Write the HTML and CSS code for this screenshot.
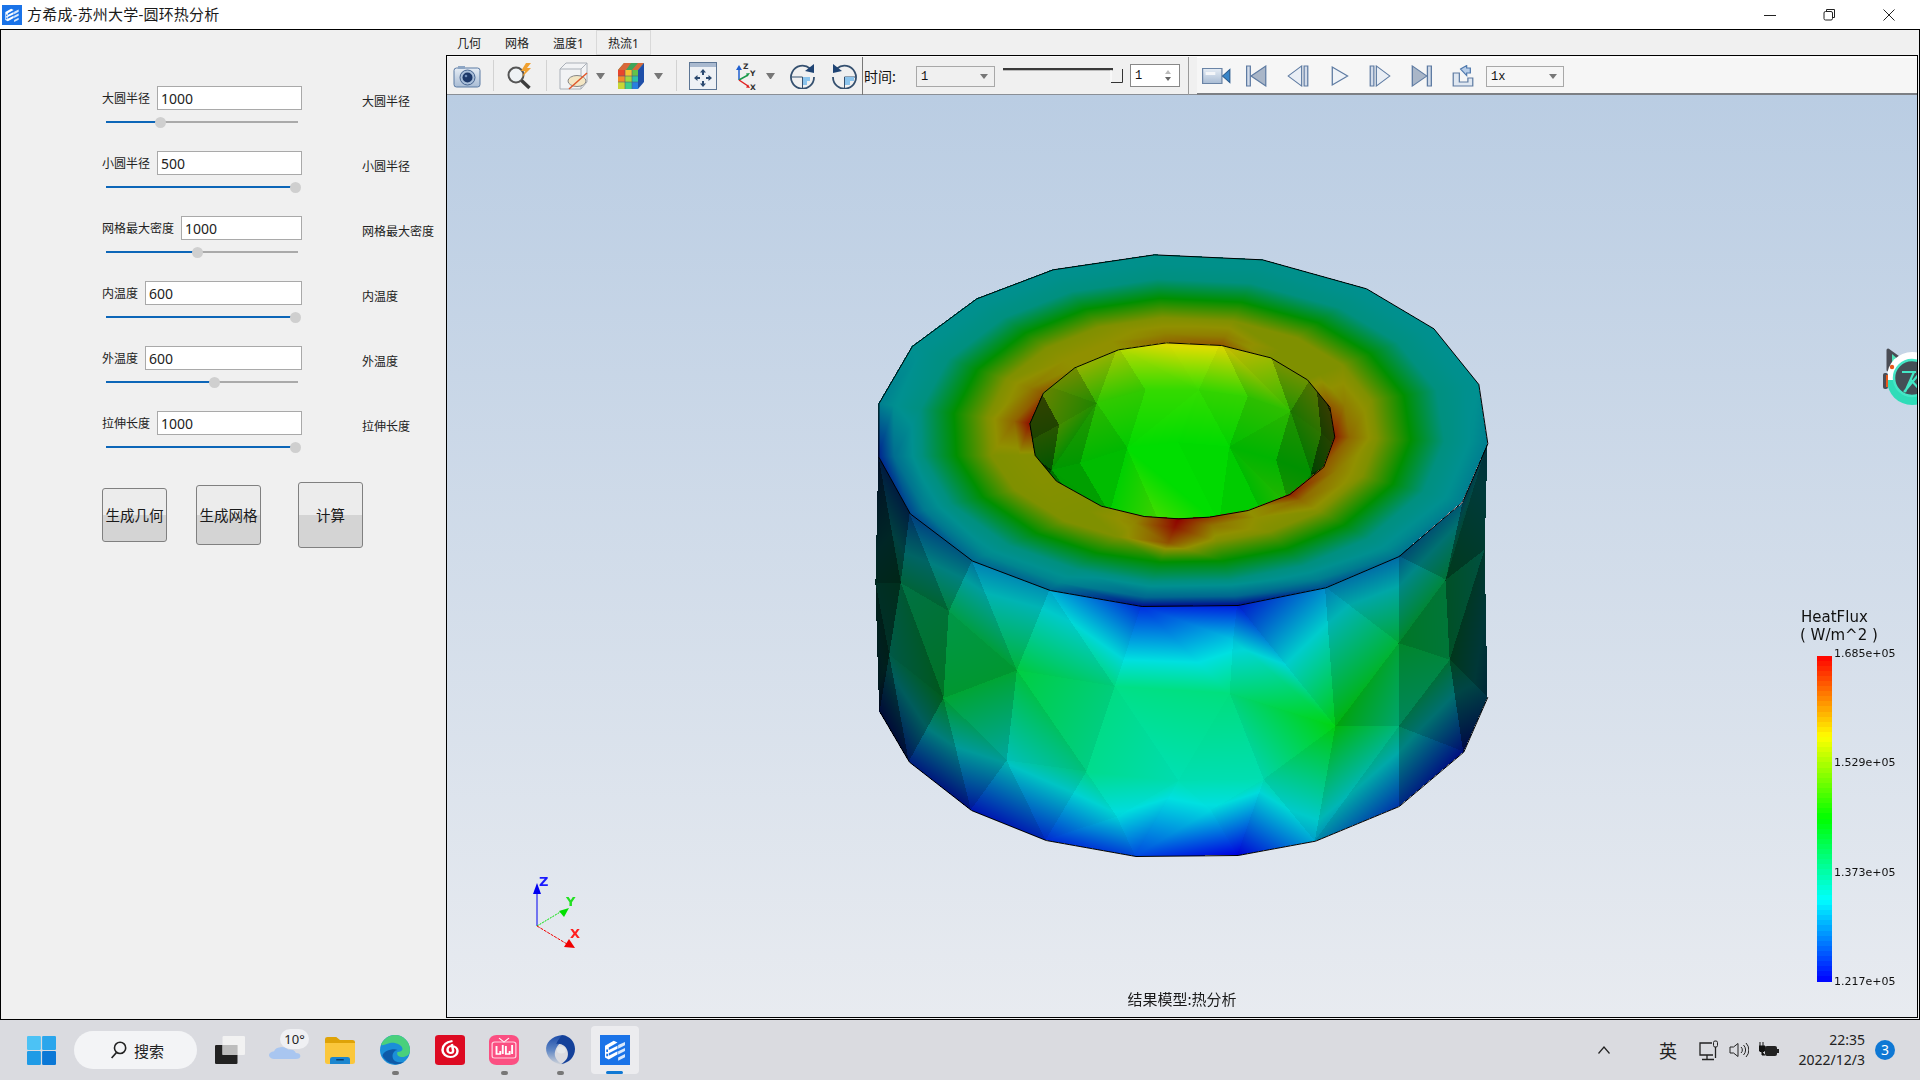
FILE: index.html
```html
<!DOCTYPE html>
<html lang="zh-CN">
<head>
<meta charset="utf-8">
<title>方希成-苏州大学-圆环热分析</title>
<link rel="stylesheet" href="styles.css">
</head>
<body>
<svg class="defs" width="0" height="0">
  <symbol id="appicon" viewBox="0 0 24 24">
    <rect width="24" height="24" fill="#1a73e8"/>
    <path d="M4 8.500 11 4.500 14 6 7 10v2l7-3.500V11L7 14.500v2L14 13v2.500L7 19.500 4 18Z" fill="#fff"/>
    <path d="M14.500 8 20 5.500v2.600L14.500 11Zm0 5L20 10.300v2.500L14.500 15.500Zm0 5L20 15.200v2.500L14.500 20.500Z" fill="#d8e8fb"/>
    <path d="M5 11.500h1.400v2H5Zm0 3.500h1.400v2H5Z" fill="#1a73e8"/>
  </symbol>
  <linearGradient id="steel" x1="0" y1="0" x2="0" y2="1"><stop offset="0" stop-color="#e6edf5"/><stop offset="1" stop-color="#a9bcd4"/></linearGradient>
  <linearGradient id="swirl" x1="0" y1="0" x2="0" y2="1"><stop offset="0" stop-color="#1a4aa8"/><stop offset=".5" stop-color="#5f86c4"/><stop offset="1" stop-color="#d3d6da"/></linearGradient>
</svg>

<header class="titlebar">
  <svg class="title-icon"><use href="#appicon"/></svg>
  <span class="title-text">方希成-苏州大学-圆环热分析</span>
  <div class="winctl">
    <svg width="12" height="12" viewBox="0 0 12 12"><path d="M0 6.500h12" stroke="#222" fill="none"/></svg>
    <svg width="13" height="13" viewBox="0 0 13 13"><path d="M3.500 3V1.500h8v8H10" stroke="#222" fill="none"/><rect x="1" y="3.500" width="8.500" height="8.500" rx="1.500" stroke="#222" fill="none"/></svg>
    <svg width="12" height="12" viewBox="0 0 12 12"><path d="M.5.500l11 11M11.500.500l-11 11" stroke="#222" fill="none"/></svg>
  </div>
</header>

<main class="main">
  <section class="panel">
    <div class="field">
      <div class="fline"><label class="flabel">大圆半径</label><input class="finput" value="1000"></div>
      <span class="rlabel">大圆半径</span>
      <div class="slider"><i class="fill" style="width:28%"></i><b class="thumb" style="left:28%"></b></div>
    </div>
    <div class="field">
      <div class="fline"><label class="flabel">小圆半径</label><input class="finput" value="500"></div>
      <span class="rlabel">小圆半径</span>
      <div class="slider"><i class="fill" style="width:98.400%"></i><b class="thumb" style="left:98.400%"></b></div>
    </div>
    <div class="field">
      <div class="fline"><label class="flabel">网格最大密度</label><input class="finput" value="1000"></div>
      <span class="rlabel">网格最大密度</span>
      <div class="slider"><i class="fill" style="width:47.400%"></i><b class="thumb" style="left:47.400%"></b></div>
    </div>
    <div class="field">
      <div class="fline"><label class="flabel">内温度</label><input class="finput" value="600"></div>
      <span class="rlabel">内温度</span>
      <div class="slider"><i class="fill" style="width:98.400%"></i><b class="thumb" style="left:98.400%"></b></div>
    </div>
    <div class="field">
      <div class="fline"><label class="flabel">外温度</label><input class="finput" value="600"></div>
      <span class="rlabel">外温度</span>
      <div class="slider"><i class="fill" style="width:56.250%"></i><b class="thumb" style="left:56.250%"></b></div>
    </div>
    <div class="field">
      <div class="fline"><label class="flabel">拉伸长度</label><input class="finput" value="1000"></div>
      <span class="rlabel">拉伸长度</span>
      <div class="slider"><i class="fill" style="width:98.400%"></i><b class="thumb" style="left:98.400%"></b></div>
    </div>
    <div class="actions">
      <button class="act act-a">生成几何</button>
      <button class="act act-b">生成网格</button>
      <button class="act act-c">计算</button>
    </div>
  </section>

  <section class="work">
    <nav class="tabs">
      <span class="tab tab-first">几何</span>
      <span class="tab">网格</span>
      <span class="tab">温度1</span>
      <span class="tab tab-on">热流1</span>
    </nav>
    <div class="viewer">
      <div class="toolbar">
        <svg class="m6" width="28" height="24" viewBox="0 0 28 24"><rect x="1" y="4" width="26" height="19" rx="2.500" fill="url(#steel)" stroke="#5b7aa3"/><rect x="5" y="2" width="7" height="3" fill="#8ea6c4"/><circle cx="14.500" cy="13.500" r="7.500" fill="#a8bdd8" stroke="#47648f"/><circle cx="14.500" cy="13.500" r="5" fill="#1c3768"/><circle cx="13" cy="12" r="1.300" fill="#6f8cb8"/></svg>
        <i class="sep m12"></i>
        <svg class="m12" width="28" height="28" viewBox="0 0 28 28"><circle cx="10" cy="13" r="7.500" fill="#eef2f5" stroke="#555" stroke-width="2"/><path d="M15.500 18.500l8 7.500" stroke="#3d3d3d" stroke-width="3.500"/><path d="M20 1l-5 8h4l-3 6 9-9h-4l4-5Z" fill="#f0a030"/></svg>
        <i class="sep m12"></i>
        <svg class="m12" width="29" height="28" viewBox="0 0 29 28"><path d="M1 7 7 1h21v19l-6 7H1Z" fill="#f2f3f5" stroke="#aab0b8"/><path d="M1 7h21v20M22 7l6-6" fill="none" stroke="#aab0b8"/><ellipse cx="18" cy="19" rx="9" ry="5.500" fill="#f3e6c4" stroke="#888"/><path d="M10 27 28 11" stroke="#e0572a" stroke-width="1.500"/></svg>
        <i class="caret m8"></i>
        <svg class="m13" width="27" height="27" viewBox="0 0 27 27"><path d="M6 1h20l-6 7H0Z" fill="#3fa55a"/><path d="M6 1h7L8 8H0Zm14 0h6l-6 7h-6Z" fill="#d9683a"/><rect y="8" width="7" height="6" fill="#e8452c"/><rect x="7" y="8" width="7" height="6" fill="#f5c232"/><rect x="14" y="8" width="6" height="6" fill="#63c34a"/><rect y="14" width="7" height="6" fill="#f58a2a"/><rect x="7" y="14" width="7" height="6" fill="#a4d83c"/><rect x="14" y="14" width="6" height="6" fill="#2cc3a8"/><rect y="20" width="7" height="7" fill="#c9d634"/><rect x="7" y="20" width="7" height="7" fill="#3ccf8a"/><rect x="14" y="20" width="6" height="7" fill="#2a7fe0"/><path d="M20 8l6-7v19l-6 7Z" fill="#1f4fa8"/><path d="M7 8v19M14 8v19M0 14h20M0 20h20" stroke="#55607a" stroke-width=".6"/></svg>
        <i class="caret m9"></i>
        <i class="sep m13"></i>
        <svg class="m12" width="28" height="28" viewBox="0 0 28 28"><rect x=".5" y=".5" width="27" height="27" fill="#eef1f5" stroke="#5c7594"/><rect x="1" y="1" width="26" height="4" fill="#a9b9cf"/><path d="M14 7l3 3.500h-2V13h-2v-2.500h-2Zm0 18l3-3.500h-2V19h-2v2.500h-2ZM5 16l3.500-3v2H11v2H8.500v2Zm18 0-3.500-3v2H17v2h2.500v2Z" fill="#2c4a70"/></svg>
        <svg class="m17" width="24" height="28" viewBox="0 0 24 28"><path d="M5 18V6" stroke="#1f5fd0" stroke-width="1.500"/><path d="M5 3l3 5H2Z" fill="#1f5fd0"/><path d="M5 18l9-5" stroke="#1a9a4a" stroke-width="1.500"/><path d="M16 11l-4 .5 1.500 3Z" fill="#1a9a4a"/><path d="M5 18l9 6" stroke="#e02020" stroke-width="1.500"/><path d="M16 26l-4-.5 2-3Z" fill="#e02020"/><text x="9" y="7" class="axtxt">Z</text><text x="16" y="14" class="axtxt">Y</text><text x="16" y="28" class="axtxt">X</text></svg>
        <i class="caret m8"></i>
        <svg class="m15" width="25" height="26" viewBox="0 0 25 26"><path d="M20 5.500A11.500 11.500 0 1 0 24 14" fill="none" stroke="#35506f" stroke-width="1.800"/><path d="M1.500 14H12.500V25" fill="none" stroke="#35506f"/><path d="M13 14h7v4h-3v4h-4Z" fill="#8cc4ec"/><path d="M24 1v9l-9-2Z" fill="#1f4474"/></svg>
        <svg class="m17" width="25" height="26" viewBox="0 0 25 26"><path d="M5 5.500A11.500 11.500 0 1 1 1 14" fill="none" stroke="#35506f" stroke-width="1.800"/><path d="M23.500 14H12.500V25" fill="none" stroke="#35506f"/><path d="M13 14h9v4h-4v4h-5Z" fill="#8cc4ec"/><path d="M1 1v9l9-2Z" fill="#1f4474"/></svg>
        <i class="sep sep-dark m5"></i>
        <span class="time-label">时间:</span>
        <div class="combo combo-time"><span>1</span><i class="caret"></i></div>
        <svg class="m8" width="120" height="24" viewBox="0 0 120 24"><path d="M0 5h110" stroke="#3a3a3a" stroke-width="2"/><path d="M0 6.500h110" stroke="#bbb"/><path d="M119.500 5v13.500H108" fill="none" stroke="#333"/><path d="M108 6v12" stroke="#fff"/></svg>
        <div class="spin"><span>1</span><span class="spin-arrows"><i class="up"></i><i class="dn"></i></span></div>
        <i class="sep sep-mid m8"></i>
        <div class="player">
          <svg class="m5" width="29" height="16" viewBox="0 0 24 16" preserveAspectRatio="none"><rect x=".5" y=".5" width="16" height="15" fill="url(#steel)" stroke="#6a84a6"/><rect x="3" y="4" width="8" height="3" fill="#f4f6f9"/><path d="M17 8 23 1.500v13Z" fill="#3a86c8" stroke="#2a5b8e"/></svg>
          <svg class="m15" width="21" height="22" viewBox="0 0 17 22" preserveAspectRatio="none"><rect x=".5" y="1" width="3" height="20" fill="#d3dcea" stroke="#5e7ba2"/><path d="M16 1v20L4 11Z" fill="#a9b6c8" stroke="#5e7ba2"/></svg>
          <svg class="m20" width="22" height="22" viewBox="0 0 18 22" preserveAspectRatio="none"><path d="M12 1v20L1 11Z" fill="#e9eef5" stroke="#5e7ba2"/><rect x="14" y="1" width="3" height="20" fill="#d3dcea" stroke="#5e7ba2"/></svg>
          <svg class="m22" width="18" height="20" viewBox="0 0 14 20" preserveAspectRatio="none"><path d="M1 1v18L13 10Z" fill="#eef2f7" stroke="#5e7ba2"/></svg>
          <svg class="m20" width="22" height="22" viewBox="0 0 18 22" preserveAspectRatio="none"><rect x="1" y="1" width="3" height="20" fill="#d3dcea" stroke="#5e7ba2"/><path d="M6 1v20L17 11Z" fill="#e9eef5" stroke="#5e7ba2"/></svg>
          <svg class="m20" width="21" height="22" viewBox="0 0 16 22" preserveAspectRatio="none"><path d="M1 1v20L12 11Z" fill="#a9b6c8" stroke="#5e7ba2"/><rect x="12.500" y="1" width="3" height="20" fill="#d3dcea" stroke="#5e7ba2"/></svg>
          <svg class="m20" width="22" height="22" viewBox="0 0 18 22" preserveAspectRatio="none"><path d="M1 8h5v9h7v-4h4v8H1Z" fill="#dfe7f1" stroke="#5e7ba2"/><path d="M8 4 13 .500 13 3h3v5h-3v2.500Z" transform="translate(-1 0)" fill="#b7cde8" stroke="#4f79ad"/></svg>
          <div class="combo combo-speed"><span>1x</span><i class="caret"></i></div>
        </div>
      </div>

      <div class="view3d">
        <canvas id="scene" class="scene" width="1470" height="922"></canvas>

        <svg class="triad" width="70" height="80" viewBox="0 0 70 80">
          <path d="M18 60V22" stroke="#0000f0" stroke-width="1"/><path d="M18 17l4 11h-8Z" fill="#0000f0"/>
          <path d="M18 60l25-15" stroke="#00e000" stroke-dasharray="2 1"/><path d="M50 42l-5 9-5-6Z" fill="#00e000"/>
          <path d="M18 60l30 18" stroke="#f00000" stroke-dasharray="3 1"/><path d="M56 82l-11-1 5-8Z" fill="#f00000"/>
          <text x="20" y="20" class="tz">Z</text><text x="47" y="40" class="ty">Y</text><text x="51" y="72" class="tx">X</text>
        </svg>

        <svg class="mascot" width="60" height="90" viewBox="0 0 60 90">
          <path d="M28 20 46 33 28 40Z" fill="#4a4d55" stroke="#4a4d55" stroke-width="3" stroke-linejoin="round"/>
          <path d="M32 24 41 32 32 34Z" fill="#4fe3b8"/>
          <circle cx="52" cy="47" r="25" fill="#fff"/>
          <path d="M27 50A25 25 0 0 0 77 50Z" fill="#2fdcb8"/>
          <circle cx="32" cy="37" r="2.200" fill="#e8591c"/>
          <rect x="23" y="43" width="5" height="16" rx="2" fill="#4a4d55"/><rect x="26" y="45" width="2" height="12" fill="#e8591c"/>
          <circle cx="52" cy="48" r="18" fill="#444e56" stroke="#44e6c6" stroke-width="2.500"/>
          <path d="M42 42h14M54 42 45 62M50 49 62 62M44 62 64 38" stroke="#44e6c6" stroke-width="2.200" fill="none"/>
        </svg>

        <div class="legend">
          <div class="lg-title">HeatFlux</div>
          <div class="lg-unit">( W/m^2 )</div>
          <div class="lg-scale">
            <canvas id="bar" class="lg-bar" width="15" height="326"></canvas>
            <div class="lg-labels"><span>1.685e+05</span><span>1.529e+05</span><span>1.373e+05</span><span>1.217e+05</span></div>
          </div>
        </div>

        <div class="caption">结果模型:热分析</div>
      </div>
    </div>
  </section>
</main>

<footer class="taskbar">
  <svg class="tb-win" width="29" height="29" viewBox="0 0 24 29" preserveAspectRatio="none"><rect width="11.500" height="14" rx="1" fill="#4cc2f5"/><rect x="12.500" width="11.500" height="14" rx="1" fill="#2ba6ec"/><rect y="15" width="11.500" height="14" rx="1" fill="#1f9be6"/><rect x="12.500" y="15" width="11.500" height="14" rx="1" fill="#0b78d6"/></svg>
  <div class="tb-search">
    <svg width="17" height="18" viewBox="0 0 16 17"><circle cx="9.500" cy="6.500" r="5.300" fill="none" stroke="#222" stroke-width="1.500"/><path d="M6 11 1.500 16" stroke="#222" stroke-width="1.500"/></svg>
    <span>搜索</span>
  </div>
  <svg class="tb-task" width="30" height="28" viewBox="0 0 24 28" preserveAspectRatio="none"><rect y="9" width="18" height="19" rx="1" fill="#222"/><rect x="6" width="18" height="19" rx="1" fill="#f4f4f4" fill-opacity=".9"/><rect x="6" y="9" width="12" height="10" fill="#bdbdbd"/></svg>
  <div class="tb-weather">
    <svg class="tb-cloud" width="32" height="12" viewBox="0 0 25 14" preserveAspectRatio="none"><path d="M5 14a4.500 4.500 0 0 1-1-9 6 6 0 0 1 11-2 5.500 5.500 0 0 1 6 4 3.500 3.500 0 0 1 0 7Z" fill="#a9c6f0"/></svg>
    <span class="tb-temp">10°</span>
  </div>
  <svg class="tb-files" width="30" height="27" viewBox="0 0 24 27" preserveAspectRatio="none"><path d="M0 2a2 2 0 0 1 2-2h7l3 3h10a2 2 0 0 1 2 2v4H0Z" fill="#dfa308"/><path d="M0 6h24v19a2 2 0 0 1-2 2H2a2 2 0 0 1-2-2Z" fill="#fbc73c"/><path d="M4 22a2 2 0 0 1 2-2h12a2 2 0 0 1 2 2v5H4Z" fill="#1c86cf"/><rect x="9" y="22" width="6" height="1.500" fill="#0b3f6e"/></svg>
  <div class="tb-app tb-edge">
    <svg width="30" height="30" viewBox="0 0 24 30" preserveAspectRatio="none"><ellipse cx="12" cy="15" rx="12" ry="15" fill="#1b8fd8"/><path d="M12 0a12 15 0 0 1 12 15c0 5-3 7-6 7s-5-2-4-5c2 0 4-1 4-3 0-4-6-7-10-6S1 12 1 9C3 4 7 0 12 0Z" fill="#49d07c"/><path d="M2 21c3 7 11 11 17 6-4 1-9 0-9-6 0-3 2-6 4-6-3-2-12 1-12 6Z" fill="#0e5aa8"/></svg>
    <i class="tb-dot"></i>
  </div>
  <div class="tb-app tb-net">
    <svg width="30" height="30" viewBox="0 0 24 30" preserveAspectRatio="none"><rect width="24" height="30" rx="3" fill="#dd0a22"/><path d="M14 6c-5 1-8 4-8 9 0 4 3 7 6.500 7s5.500-3 5.500-6-2-5-5-5c-2 0-3 2-3 4s1.500 3 2.500 3 2-1 2-2.500L13.500 9" fill="none" stroke="#fff" stroke-width="2"/></svg>
  </div>
  <div class="tb-app tb-bili">
    <svg width="30" height="30" viewBox="0 0 24 30" preserveAspectRatio="none"><rect width="24" height="30" rx="6" fill="#fb4f82"/><path d="M8 3l4 4 4-4" stroke="#fff" fill="none"/><rect x="2.500" y="7" width="19" height="16" rx="2" fill="none" stroke="#ffd3e0"/><path d="M6 11v8h3v-3M11 10v9M13.500 11v8h3v-3M18.500 10v9" stroke="#fff" stroke-width="1.500" fill="none"/></svg>
    <i class="tb-dot"></i>
  </div>
  <div class="tb-app tb-swirl">
    <svg width="30" height="30" viewBox="0 0 24 30" preserveAspectRatio="none"><path d="M14 0C5 1 0 8 1 16c1 8 7 13 14 14-5-3-8-8-7-13S12 6 16 8C14 5 14 3 14 0Z" fill="url(#swirl)"/><path d="M14 0c6 1 10 7 10 14 0 8-5 14-11 15 5-4 6-8 5-13S13 8 9 9c1-3 3-7 5-9Z" fill="#14419a"/><circle cx="13" cy="15" r="3.500" fill="#e4e7ea"/></svg>
    <i class="tb-dot"></i>
  </div>
  <div class="tb-active">
    <svg width="30" height="30" viewBox="0 0 24 24"><use href="#appicon"/></svg>
    <i class="tb-ind"></i>
  </div>
  <div class="tray">
    <svg width="12" height="8" viewBox="0 0 12 8"><path d="M.5 7.500 6 1l5.500 6.500" fill="none" stroke="#222" stroke-width="1.200"/></svg>
    <span class="tray-ime">英</span>
    <svg class="tray-net" width="20" height="21" viewBox="0 0 20 21"><path d="M13 3H1v12h13" fill="none" stroke="#222" stroke-width="1.300"/><path d="M8 15v4M3 19.500h12" stroke="#222" stroke-width="1.300"/><rect x="14.500" y="1" width="4" height="6" rx="1.500" fill="none" stroke="#222"/><path d="M16.500 7v11" stroke="#222" stroke-width="1.300"/></svg>
    <svg class="tray-vol" width="20" height="16" viewBox="0 0 20 16"><path d="M1 5h3.500L9 1.500v13L4.500 11H1Z" fill="none" stroke="#222"/><path d="M12 5a4 4 0 0 1 0 6M14.500 3a7 7 0 0 1 0 10M17 1a10 10 0 0 1 0 14" fill="none" stroke="#222"/></svg>
    <svg class="tray-bat" width="20" height="16" viewBox="0 0 20 16"><path d="M1 0v4M4 0v4M0 4h6v3a3 3 0 0 1-6 0ZM3 9v4h3" fill="#111" stroke="#111"/><rect x="6" y="4" width="12" height="10" rx="2" fill="#222"/><rect x="18" y="7" width="2" height="4" fill="#222"/></svg>
    <div class="clock"><span>22:35</span><span>2022/12/3</span></div>
    <span class="badge">3</span>
  </div>
</footer>
<script src="app.js"></script>
</body>
</html>
```
FILE: styles.css
```css
* { box-sizing: border-box; }
html, body { margin: 0; height: 1080px; overflow: hidden; }
body {
  display: flex; flex-direction: column; background: #fff; color: #222;
  font-family: "Noto Sans", "Noto Sans CJK SC", sans-serif; font-size: 12px;
}
.defs { position: absolute; }

.titlebar { height: 29px; flex: none; display: flex; align-items: center; padding: 0 0 0 2px; background: #fff; }
.title-icon { width: 20px; height: 20px; }
.title-text { margin: 0 0 3px 5px; font-size: 15px; letter-spacing: .2px; color: #1a1a1a; }
.winctl { margin-left: auto; display: flex; align-items: center; gap: 47px; padding-right: 25px; }

.main { height: 991px; flex: none; display: flex; border: 1px solid #000; }

.panel { width: 445px; flex: none; background: #f0f0f0; padding: 56px 0 0 101px; }
.field {
  display: grid; grid-template-columns: 200px auto; column-gap: 60px;
  grid-template-rows: 24px 12px; row-gap: 6px; margin-bottom: 23px; justify-content: start;
}
.fline { display: flex; align-items: center; gap: 7px; }
.flabel { flex: none; font-size: 12px; color: #222; }
.finput {
  flex: 1; min-width: 0; height: 24px; border: 1px solid #a9a9a9; background: #fff; padding: 1px 3px 0;
  font: 14px "Noto Sans", sans-serif; color: #222; border-radius: 0; outline: 0;
}
.rlabel { align-self: center; margin-top: 6px; font-size: 12px; color: #222; white-space: nowrap; }
.slider { position: relative; margin: 5px 0 0 4px; width: 192px; height: 2px; background: #aaa; }
.fill { display: block; height: 2px; background: #0d66b8; }
.thumb {
  position: absolute; top: -4px; width: 11px; height: 11px; margin-left: -5px; border-radius: 50%;
  background: #cfcfcf;
}
.actions { display: flex; align-items: center; height: 66px; margin-top: 29px; }
.act {
  width: 65px; flex: none; padding: 0 0 2px; border: 1px solid #808080; border-radius: 3px; color: #1a1a1a;
  background: linear-gradient(#ececec 0 50%, #d4d4d4 50% 100%);
  font: 14.500px "Noto Sans CJK SC", sans-serif;
}
.act-a { height: 54px; }
.act-b { height: 60px; margin-left: 29px; }
.act-c { height: 66px; margin-left: 37px; }

.work { flex: 1; min-width: 0; display: flex; flex-direction: column; background: #f0f0f0; }
.tabs { height: 25px; flex: none; display: flex; align-items: flex-end; }
.tab { height: 25px; line-height: 27px; padding: 0 12px; font-size: 12px; color: #222; }
.tab-first { padding-left: 11px; }
.tab-on { height: 25px; line-height: 25px; padding: 0 11px; border: 1px solid #d9d9d9; background: #f0f0f0; }

.viewer { flex: none; height: 963px; margin-right: 1px; display: flex; flex-direction: column; border: 1px solid #000; }
.toolbar {
  height: 39px; flex: none; display: flex; align-items: center; background: #f0f0f0;
  border-bottom: 1px solid #8a8f96; border-top: 1px solid #fafafa;
}
.toolbar > svg, .player > svg { flex: none; }
.m5 { margin-left: 5px; } .m6 { margin-left: 6px; }
.m8 { margin-left: 8px; } .m9 { margin-left: 9px; } .m12 { margin-left: 12px; } .m13 { margin-left: 13px; }
.m15 { margin-left: 15px; } .m17 { margin-left: 17px; } .m20 { margin-left: 20px; } .m22 { margin-left: 22px; }
.sep { flex: none; width: 1px; height: 31px; background: #d2d2d2; }
.sep-dark { background: #777; height: 38px; }
.sep-mid { background: #9a9a9a; height: 38px; }
.caret { flex: none; width: 9px; height: 0; border-left: 4.500px solid transparent; border-right: 4.500px solid transparent; border-top: 6px solid #777; }
.axtxt { font: bold 7.500px "DejaVu Sans", sans-serif; fill: #333; }
.time-label { margin-left: 1px; width: 52px; flex: none; font: 14px "Noto Sans CJK SC", sans-serif; color: #111; }
.combo {
  height: 21px; flex: none; display: flex; align-items: center; justify-content: space-between; padding: 0 6px 0 4px; margin-top: 2px;
  border: 1px solid #a8a8a8; font: 12px "Liberation Mono", monospace; color: #111;
}
.combo-time { width: 79px; }
.combo-speed { width: 78px; margin-left: 12px; }
.combo .caret { width: 8px; border-left-width: 4px; border-right-width: 4px; border-top-width: 5px; }
.spin {
  margin-left: 7px; width: 50px; height: 23px; flex: none; display: flex; align-items: center; justify-content: space-between;
  padding: 0 8px 0 4px; background: #fff; border: 1px solid #888; font: 12px "Liberation Mono", monospace; color: #111;
}
.spin-arrows { display: flex; flex-direction: column; gap: 3px; }
.spin-arrows i { display: block; width: 0; height: 0; border-left: 3px solid transparent; border-right: 3px solid transparent; }
.spin-arrows .up { border-bottom: 4px solid #bbb; }
.spin-arrows .dn { border-top: 4px solid #666; }
.player {
  margin-left: 8px; flex: 1; align-self: stretch; display: flex; align-items: center; background: #f6f6f6;
  border-bottom: 2px solid #7c7f84; margin-bottom: -1px; border-top: 1px solid #fff;
}

.view3d { position: relative; height: 922px; flex: none; overflow: hidden; background: linear-gradient(#bacde3, #e8ebf0); }
.scene { position: absolute; left: 0; top: 0; }
.triad { position: absolute; left: 72px; top: 771px; overflow: visible; }
.tz { font: bold 13px "DejaVu Sans", sans-serif; fill: #1a1aff; }
.ty { font: bold 13px "DejaVu Sans", sans-serif; fill: #22e022; }
.tx { font: bold 13px "DejaVu Sans", sans-serif; fill: #ff2020; }
.mascot { position: absolute; left: 1413px; top: 235px; }

.legend { position: absolute; left: 1354px; top: 513px; color: #111; font-family: "DejaVu Sans", sans-serif; }
.lg-title { font-size: 15px; line-height: 18px; }
.lg-unit { font-size: 15px; line-height: 18px; margin-left: -1px; white-space: pre; }
.lg-scale { display: flex; margin: 3px 0 0 16px; }
.lg-bar { width: 15px; height: 326px; margin-top: 9px; flex: none; }
.lg-labels {
  height: 341px; margin-left: 2px; display: flex; flex-direction: column; justify-content: space-between;
  font-size: 11px; line-height: 13px;
}
.caption { position: absolute; left: 0; right: 0; top: 893px; text-align: center; font: 15px "Noto Sans CJK SC", sans-serif; color: #1a1a1a; }

.taskbar { height: 60px; flex: none; display: flex; align-items: center; background: #dadbe0; padding-left: 27px; }
.taskbar > svg { flex: none; }
.tb-search {
  margin-left: 18px; width: 123px; height: 38px; flex: none; display: flex; align-items: center; gap: 7px; padding-left: 36px;
  border-radius: 19px; background: #f3f4f6; font: 15px "Noto Sans CJK SC", sans-serif; color: #222;
}
.tb-task { margin-left: 18px; }
.tb-weather { position: relative; margin-left: 24px; width: 32px; height: 30px; flex: none; display: flex; align-items: flex-end; }
.tb-cloud { margin-bottom: 6px; }
.tb-temp {
  position: absolute; left: 11px; top: -6px; width: 29px; height: 20px; border-radius: 10px; background: #eff0f3;
  text-align: center; font: 13px/20px "Noto Sans", sans-serif; color: #222;
}
.tb-files { margin-left: 24px; }
.tb-app { position: relative; flex: none; width: 30px; height: 30px; }
.tb-app svg { display: block; }
.tb-edge { margin-left: 25px; }
.tb-net { margin-left: 25px; }
.tb-bili { margin-left: 24px; }
.tb-swirl { margin-left: 26px; }
.tb-dot { position: absolute; left: 12px; bottom: -10px; width: 7px; height: 4px; border-radius: 2px; background: #777; }
.tb-active {
  position: relative; margin-left: 16px; width: 48px; height: 48px; flex: none; display: flex; justify-content: center; align-items: center;
  border-radius: 4px; background: #ececef;
}
.tb-ind { position: absolute; left: 15px; bottom: 0; width: 17px; height: 3px; border-radius: 2px; background: #0f78d4; }
.tray { margin-left: auto; display: flex; align-items: center; padding-right: 25px; }
.tray-ime { margin-left: 49px; font: 18px "Noto Sans CJK SC", sans-serif; color: #222; }
.tray-net { margin-left: 22px; }
.tray-vol { margin-left: 10px; }
.tray-bat { margin-left: 10px; }
.clock { margin-left: 20px; width: 66px; display: flex; flex-direction: column; align-items: flex-end; font: 14px/20px "Noto Sans", sans-serif; color: #222; white-space: nowrap; }
.badge {
  margin-left: 10px; width: 20px; height: 20px; border-radius: 50%; background: #0f78d4; color: #fff;
  text-align: center; font: 14px/20px "Noto Sans", sans-serif;
}
```
FILE: app.js
```js
(function () {
  var OX = 447, OY = 95;
  var cv = document.getElementById('scene');
  var ctx = cv.getContext('2d');
  var W = cv.width, H = cv.height;
  var img = ctx.createImageData(W, H);
  var D = img.data;

  function cmap(s) {
    s = Math.max(0, Math.min(1, s)) * 4;
    var k = [[0, 0, 255], [0, 255, 255], [0, 255, 0], [255, 255, 0], [255, 0, 0]];
    var i = Math.min(3, Math.floor(s)), f = s - i, a = k[i], b = k[i + 1];
    return [a[0] + (b[0] - a[0]) * f, a[1] + (b[1] - a[1]) * f, a[2] + (b[2] - a[2]) * f];
  }
  function tri(a, b, c, br) {
    var x0 = Math.max(0, Math.floor(Math.min(a.x, b.x, c.x))), x1 = Math.min(W - 1, Math.ceil(Math.max(a.x, b.x, c.x)));
    var y0 = Math.max(0, Math.floor(Math.min(a.y, b.y, c.y))), y1 = Math.min(H - 1, Math.ceil(Math.max(a.y, b.y, c.y)));
    var d = (b.y - c.y) * (a.x - c.x) + (c.x - b.x) * (a.y - c.y);
    if (!d) return;
    for (var y = y0; y <= y1; y++) for (var x = x0; x <= x1; x++) {
      var px = x + .5, py = y + .5;
      var u = ((b.y - c.y) * (px - c.x) + (c.x - b.x) * (py - c.y)) / d;
      var v = ((c.y - a.y) * (px - c.x) + (a.x - c.x) * (py - c.y)) / d;
      var w = 1 - u - v;
      if (u < -.004 || v < -.004 || w < -.004) continue;
      var col = cmap(u * a.s + v * b.s + w * c.s), p = (y * W + x) * 4;
      D[p] = col[0] * br; D[p + 1] = col[1] * br; D[p + 2] = col[2] * br; D[p + 3] = 255;
    }
  }
  /* mesh points are given in a crop's own units: x at 2.45 per pixel, y at 3 */
  function z(x, y, s, oy) { return { x: 860 + x / 2.45 - OX, y: oy + y / 3 - OY, s: s }; }
  function shade(t, cx, rx, top) {
    var mx = (t[0].x + t[1].x + t[2].x) / 3;
    var n = (mx - cx) / rx;
    return Math.max(.12, top * Math.pow(Math.max(0, 1 - n * n), .6));
  }

  /* outer side wall */
  var S = {}, sd = {
    T0: [45, -130, .1], T1: [122, 40, .12], T2: [275, 183, .18], T3: [465, 270, .2], T4: [690, 318, .05], T5: [925, 315, .03],
    T6: [1140, 262, .17], T7: [1320, 168, .16], T8: [1476, 10, .2], T9: [1537, -170, .2],
    B0: [48, 635, .05], B1: [120, 785, .06], B2: [272, 930, .03], B3: [455, 1020, .05], B4: [675, 1068, .08], B5: [925, 1065, 0],
    B6: [1115, 1022, .2], B7: [1320, 918, .08], B8: [1478, 755, .03], B9: [1537, 590, .18],
    L0: [38, 250, .3], X0: [45, 560, .2], L1: [100, 250, .35], L2: [72, 465, .3], M1: [218, 335, .38], M2: [205, 595, .42],
    N1: [385, 512, .42], N2: [360, 782, .26], O1: [625, 560, .35], O2: [555, 815, .34], P1: [907, 580, .36], P2: [780, 843, .3],
    Q1: [1165, 680, .48], Q2: [990, 838, .3], R1: [1320, 430, .42], R2: [1320, 680, .33], S1: [1435, 240, .38], S2: [1445, 480, .38], S3: [1530, 150, .3],
    U1: [915, 420, .22], W1: [860, 930, .24], W2: [630, 950, .24]
  };
  Object.keys(sd).forEach(function (k) { S[k] = z(sd[k][0], sd[k][1], sd[k][2], 500); });
  ('T0 T1 L1,T0 L1 L0,L0 L1 L2,L0 L2 X0,X0 L2 B0,L2 B1 B0,T1 M1 L1,T1 T2 M1,L1 M1 M2,L1 M2 L2,L2 M2 B1,M2 B2 B1,' +
   'T2 N1 M1,T2 T3 N1,M1 N1 M2,N1 N2 M2,M2 N2 B2,N2 B3 B2,T3 O1 N1,T3 T4 O1,T4 P1 O1,T4 T5 U1,T5 P1 U1,T4 U1 P1,N1 O1 O2,N1 O2 N2,N2 O2 B3,O2 W2 B3,W2 B4 B3,' +
   'O1 P1 P2,O1 P2 O2,O2 P2 W2,W2 P2 B4,P2 W1 B4,W1 B5 B4,P1 Q2 P2,P2 Q2 W1,W1 Q2 B5,Q2 B6 B5,T5 T6 Q1,T5 Q1 U1,U1 Q1 P1,P1 Q1 Q2,Q1 B6 Q2,T6 T7 R1,T6 R1 Q1,Q1 R1 R2,Q1 R2 B6,' +
   'R2 B7 B6,T7 T8 S1,T7 S1 R1,R1 S1 S2,R1 S2 R2,R2 S2 B8,R2 B8 B7,T8 T9 S1,T9 S3 S1,S1 S3 S2,S2 S3 B9,S2 B9 B8').split(',').forEach(function (t) {
    var n = t.split(' ').map(function (k) { return S[k]; });
    tri(n[0], n[1], n[2], shade(n, 1183 - OX, 306, .88));
  });

  /* far wall of the hole, seen through the opening */
  var R = [
    [[395, 540, .65], [430, 425, .72], [525, 372, .72], [632, 318, .72], [750, 297, .78], [885, 305, .78], [1005, 342, .72], [1115, 395, .72], [1190, 560, .7]],
    [[390, 620, .6], [488, 555, .62], [580, 490, .56], [700, 450, .56], [830, 450, .56], [950, 470, .56], [1055, 515, .56], [1130, 580, .6], [1190, 650, .7]],
    [[410, 680, .5], [470, 690, .5], [540, 670, .5], [655, 625, .5], [780, 608, .5], [905, 620, .5], [1020, 660, .5], [1105, 700, .5], [1170, 720, .55]],
    [[430, 780, .5], [530, 790, .5], [612, 820, .5], [735, 850, .58], [880, 850, .5], [990, 830, .5], [1052, 800, .55], [1100, 780, .55], [1170, 760, .55]]
  ].map(function (r) { return r.map(function (p) { return z(p[0], p[1], p[2], 240); }); });
  for (var j = 0; j < 3; j++) for (var i = 0; i < 8; i++) {
    var a = R[j][i], b = R[j][i + 1], c = R[j + 1][i], d = R[j + 1][i + 1];
    var t1 = (i + j) % 2 ? [a, b, d] : [a, b, c], t2 = (i + j) % 2 ? [a, d, c] : [b, d, c];
    tri(t1[0], t1[1], t1[2], shade(t1, 1182 - OX, 155, .87));
    tri(t2[0], t2[1], t2[2], shade(t2, 1182 - OX, 155, .87));
  }

  /* top face: rings from the hole to the outer rim */
  var outerS = [.22, .25, .25, .25, .26, .26, .25, .25, .25, .22, .22, .2, .14, .03, .03, .17, .18, .12, .06];
  var outer = [[45, 490], [127, 318], [285, 175], [472, 88], [720, 43], [985, 58], [1240, 145], [1405, 265], [1515, 432], [1537, 610], [1475, 785], [1320, 948], [1140, 1042], [925, 1095], [690, 1098], [465, 1050], [275, 962], [122, 820], [45, 650]]
    .map(function (p, i) { return z(p[0], p[1], outerS[i], 240); });
  var holeS = [.97, .85, .75, .75, .82, .85, .72, .72, .85, .95, .85, .95, .75, .9, 1, .8, .72, .73, .73];
  var hole = [[415, 550], [448, 458], [525, 382], [632, 328], [750, 307], [885, 315], [1005, 352], [1095, 418], [1150, 500], [1162, 590], [1135, 680], [1052, 762], [950, 810], [855, 830], [780, 835], [695, 828], [590, 797], [480, 722], [428, 645]]
    .map(function (p, i) { return z(p[0], p[1], holeS[i], 240); });
  var ts = [0, .1, .28, .5, .72, .9, 1], N = outer.length;
  function ring(i, k) {
    var h = hole[i], o = outer[i], t = ts[k], s;
    if (k === 0) s = h.s;
    else if (k === 1) s = i === 14 ? .97 : Math.min(h.s, .75 + (h.s - .75) * .35);
    else if (k === 2) s = i === 14 ? .86 : .72;
    else if (k === 3) s = .5;
    else if (k === 4) s = .28;
    else if (k === 5) s = o.s * .35 + .26 * .65;
    else s = o.s;
    return { x: h.x + (o.x - h.x) * t, y: h.y + (o.y - h.y) * t, s: s };
  }
  for (var k = 0; k < ts.length - 1; k++) for (var q = 0; q < N; q++) {
    var n = (q + 1) % N, p0 = ring(q, k), p1 = ring(n, k), p2 = ring(q, k + 1), p3 = ring(n, k + 1);
    tri(p0, p1, p2, .565); tri(p1, p3, p2, .565);
  }
  ctx.putImageData(img, 0, 0);

  /* edge lines */
  function poly(pts, close) {
    ctx.beginPath();
    pts.forEach(function (p, i) { ctx[i ? 'lineTo' : 'moveTo'](p.x + .5, p.y + .5); });
    if (close) ctx.closePath();
    ctx.stroke();
  }
  ctx.strokeStyle = '#000'; ctx.lineWidth = 1;
  poly(outer, true); poly(hole, true);
  poly(['B0', 'B1', 'B2', 'B3', 'B4', 'B5', 'B6', 'B7', 'B8', 'B9'].map(function (k) { return S[k]; }), false);

  var bar = document.getElementById('bar'), bc = bar.getContext('2d'), bands = 64, bh = bar.height / bands;
  for (var e = 0; e < bands; e++) {
    var cc = cmap(1 - (e + .5) / bands);
    bc.fillStyle = 'rgb(' + cc.map(Math.round).join(',') + ')';
    bc.fillRect(0, Math.floor(e * bh), 15, Math.ceil(bh));
  }
})();
```
